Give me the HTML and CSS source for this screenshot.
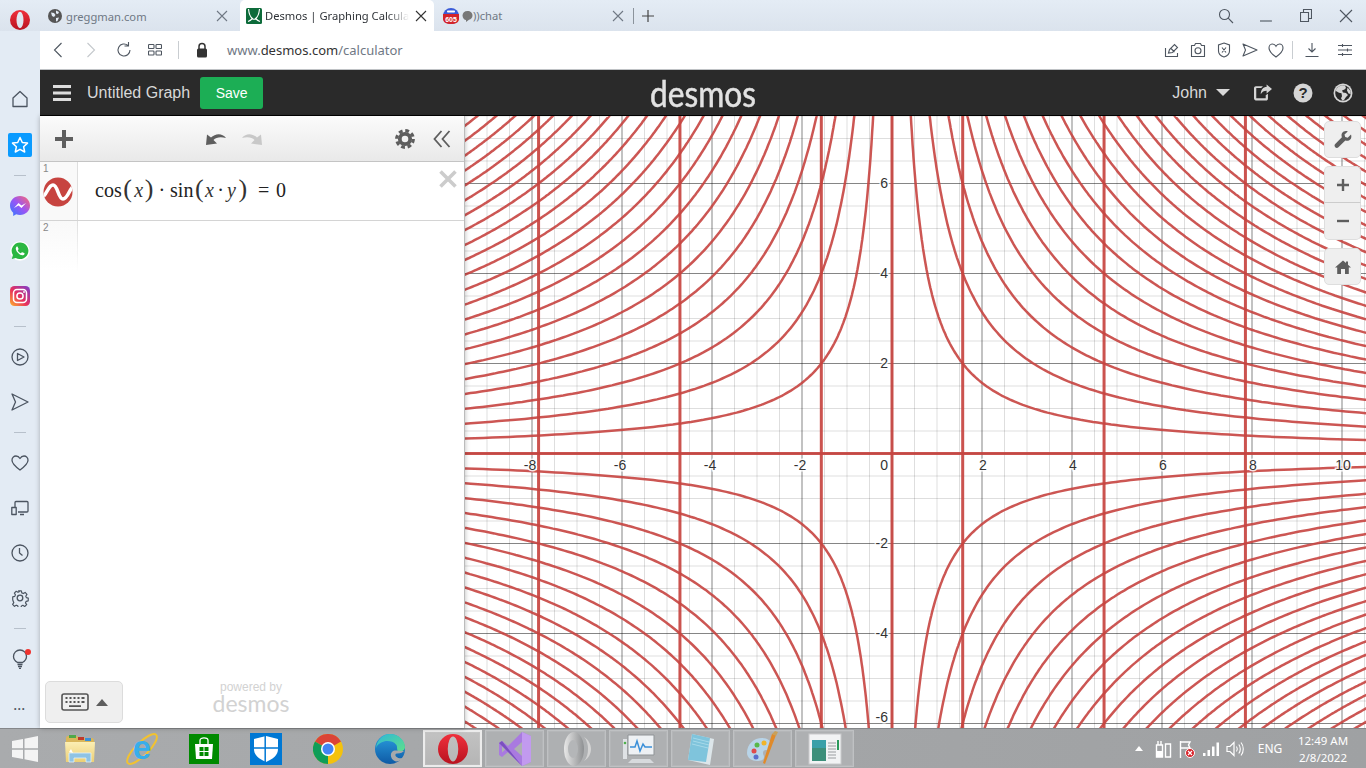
FILE: index.html
```html
<!DOCTYPE html>
<html lang="en">
<head>
<meta charset="utf-8">
<title>Desmos | Graphing Calculator</title>
<link rel="stylesheet" href="styles.css">
</head>
<body>
<header class="tabstrip">
  <div class="brand">
    <svg width="20" height="20" viewBox="0 0 20 20"><defs><linearGradient id="opr" x1="0" y1="0" x2="0" y2="1"><stop offset="0" stop-color="#f0303c"/><stop offset="1" stop-color="#b8121f"/></linearGradient></defs><path fill="url(#opr)" fill-rule="evenodd" d="M10 0a10 10 0 1 0 0 20 10 10 0 1 0 0-20zM10 1.700a3.500 8.300 0 1 1 0 16.600 3.500 8.300 0 1 1 0-16.600z"/></svg>
  </div>
  <div class="tab tab-one">
    <svg class="fav" width="14" height="14" viewBox="0 0 14 14"><circle cx="7" cy="7" r="7" fill="#555"/><path d="M3 3.500l3 .5 1.500 2L6 8 4 7zM8 1.500l3 1.500-1 2-2-.5zM8 9l3-.5-1.500 3.500L8 12.500z" fill="#e3ebf4"/></svg>
    <span class="tab-title">greggman.com</span>
    <svg class="close tab-close" viewBox="0 0 12 12"><path d="M1 1l10 10M11 1L1 11"/></svg>
  </div>
  <div class="tab tab-active">
    <svg class="fav" width="16" height="16" viewBox="0 0 16 16"><rect width="16" height="16" rx="1.500" fill="#0d6b3a"/><path d="M2.500 1c.5 5 1.500 8 4 9.500C5 12 3.500 13 2 13.500M13.500 1c-.5 5-1.500 8-4 9.500 1.500 1.500 3 2.500 4.500 3M6 10.500c1 .8 3 .8 4 0" fill="none" stroke="#fff" stroke-width="1.100"/></svg>
    <span class="tab-title tab-title-fade">Desmos | Graphing Calculator</span>
    <svg class="close tab-close-dark" viewBox="0 0 12 12"><path d="M1 1l10 10M11 1L1 11"/></svg>
  </div>
  <div class="tab tab-three">
    <svg class="fav" width="16" height="16" viewBox="0 0 16 16"><circle cx="8" cy="8" r="8" fill="#3a5bd8"/><rect x="4" y="2.500" width="8" height="2" rx=".8" fill="#fff"/><path d="M0 6h16v5c0 3-3 5-8 5s-8-2-8-5z" fill="#d3232a"/><text class="tinytext" x="8" y="13.500" text-anchor="middle">605</text></svg>
    <svg class="fav-bubble" width="11" height="12" viewBox="0 0 11 12"><path d="M5.500 1C2.500 1 .5 3 .5 5.500S2.500 10 4 10v2l3-2.200c2-.5 3.500-2.200 3.500-4.300C10.500 3 8.500 1 5.500 1z" fill="#777"/></svg>
    <span class="tab-title">))chat</span>
    <svg class="close tab-close-three" viewBox="0 0 12 12"><path d="M1 1l10 10M11 1L1 11"/></svg>
  </div>
  <span class="tab-divider"></span>
  <svg class="newtab" width="12" height="12" viewBox="0 0 12 12"><path d="M6 0v12M0 6h12"/></svg>
  <div class="winctl">
    <span class="winbtn"><svg width="16" height="16" viewBox="0 0 16 16"><circle cx="6.500" cy="6.500" r="5"/><path d="M10.200 10.200L15 15"/></svg></span>
    <span class="winbtn"><svg width="12" height="12" viewBox="0 0 12 12"><path d="M0 11h12"/></svg></span>
    <span class="winbtn"><svg width="12" height="14" viewBox="0 0 12 14"><path d="M.5 3.500h8v9h-8zM3.500 3.500v-3h8v9h-3"/></svg></span>
    <span class="winbtn"><svg width="14" height="14" viewBox="0 0 14 14"><path d="M1 1l12 12M13 1L1 13"/></svg></span>
  </div>
</header>

<div class="middle">
  <nav class="sidebar">
    <span class="side-item side-first"><svg class="side-svg" width="18" height="18" viewBox="0 0 18 18"><path d="M2 8l7-6.500L16 8v8.500H2z" stroke-linejoin="round"/></svg></span>
    <span class="side-item"><span class="star-tile"><svg width="20" height="20" viewBox="0 0 20 20"><path d="M10 2.500l2.300 5 5.200.6-3.900 3.600 1.100 5.300L10 14.300 5.300 17l1.100-5.300L2.500 8.100l5.200-.6z" fill="none" stroke="#fff" stroke-width="1.500" stroke-linejoin="round"/></svg></span></span>
    <span class="side-sep"></span>
    <span class="side-item"><svg width="20" height="20" viewBox="0 0 20 20"><defs><linearGradient id="ms" x1="0" y1="1" x2="1" y2="0"><stop offset="0" stop-color="#2f7bff"/><stop offset=".5" stop-color="#9a55f5"/><stop offset="1" stop-color="#ff6a6a"/></linearGradient></defs><path d="M10 0C4.400 0 0 4.100 0 9.600c0 2.900 1.200 5.400 3.200 7.100V20l3-1.700c1.200.4 2.500.6 3.800.6 5.600 0 10-4.100 10-9.400S15.600 0 10 0z" fill="url(#ms)"/><path d="M4 12l4.500-5 3 2.500L16 7l-4.500 5-3-2.500z" fill="#fff"/></svg></span>
    <span class="side-item"><svg width="20" height="20" viewBox="0 0 20 20"><circle cx="10" cy="10" r="9.800" fill="#fff"/><path d="M10 1.500a8.300 8.300 0 0 0-7.100 12.600L1.800 18l4-1.100A8.300 8.300 0 1 0 10 1.500z" fill="#2bb741"/><path d="M7 5.500c-.8.300-1.300 1.300-1.200 2.300.3 2.800 3.400 6 6.300 6.500 1.100.1 2.200-.5 2.400-1.400.1-.4 0-.7-.3-.8l-1.900-.9c-.3-.1-.6 0-.7.200l-.7.9c-1.400-.5-2.600-1.700-3.200-3.100l.7-.8c.2-.2.200-.5.100-.7l-.8-1.800c-.1-.3-.4-.5-.7-.4z" fill="#fff"/></svg></span>
    <span class="side-item"><svg width="20" height="20" viewBox="0 0 20 20"><defs><linearGradient id="ig" x1="0" y1="1" x2="1" y2="0"><stop offset="0" stop-color="#fdb32b"/><stop offset=".45" stop-color="#e8305c"/><stop offset="1" stop-color="#7a3ed0"/></linearGradient></defs><rect width="20" height="20" rx="4.500" fill="url(#ig)"/><rect x="3.500" y="3.500" width="13" height="13" rx="3.500" fill="none" stroke="#fff" stroke-width="1.500"/><circle cx="10" cy="10" r="3.100" fill="none" stroke="#fff" stroke-width="1.500"/><circle cx="14" cy="6" r=".9" fill="#fff"/></svg></span>
    <span class="side-sep"></span>
    <span class="side-item"><svg class="side-svg" width="18" height="18" viewBox="0 0 18 18"><circle cx="9" cy="9" r="8"/><path d="M6.500 5.500L13 9l-6.500 3.500z" stroke-linejoin="round"/></svg></span>
    <span class="side-item"><svg class="side-svg" width="18" height="18" viewBox="0 0 18 18"><path d="M1 1l16 8-16 8 3.500-8z" stroke-linejoin="round"/></svg></span>
    <span class="side-sep"></span>
    <span class="side-item"><svg class="side-svg" width="18" height="16" viewBox="0 0 18 16"><path d="M9 15C5 12 1 9 1 5.200 1 2.800 2.800 1 5 1c1.700 0 3.100 1 4 2.500C9.900 2 11.300 1 13 1c2.200 0 4 1.800 4 4.200C17 9 13 12 9 15z" stroke-linejoin="round"/></svg></span>
    <span class="side-item"><svg class="side-svg" width="18" height="16" viewBox="0 0 18 16"><path d="M4 7V2.500c0-.6.400-1 1-1h11c.6 0 1 .4 1 1V11c0 .6-.4 1-1 1H7M9 14.500h4M.8 7.500h4.400v7H.8z" stroke-linejoin="round"/></svg></span>
    <span class="side-item"><svg class="side-svg" width="18" height="18" viewBox="0 0 18 18"><circle cx="9" cy="9" r="8"/><path d="M8.500 4v5l3 2.500"/></svg></span>
    <span class="side-item"><svg class="side-svg" width="18" height="18" viewBox="0 0 18 18"><circle cx="9" cy="9" r="2.800"/><path d="M7.500 1h3l.5 2.300 1.700.8 2-1.300 2 2.200-1.300 2 .7 1.600 2.100.6-.1 3-2.200.5-.8 1.700 1.300 2-2.200 2-2-1.300-1.600.7-.6 2.100h-3l-.5-2.200-1.700-.7-2 1.200-2-2.100 1.300-2-.8-1.700L.9 10.700v-3l2.300-.5.700-1.700-1.200-2 2.100-2 2 1.200 1.400-.6z" transform="translate(.9 .9) scale(.9)" stroke-linejoin="round"/></svg></span>
    <span class="side-sep"></span>
    <span class="side-item side-bulb"><svg class="side-svg" width="16" height="20" viewBox="0 0 16 20"><path d="M5.500 13.500C3 12 1.500 10 1.500 7.500a6.500 6.500 0 0 1 13 0c0 2.500-1.500 4.500-4 6zM5.500 15.500h5M6 17.500h4M7 19.300h2"/></svg><span class="bulb-dot"></span></span>
    <span class="side-dots">•••</span>
  </nav>

  <div class="content">
    <div class="addressbar">
      <div class="nav-left">
        <span class="tb-slot"><svg class="tb-svg" width="10" height="16" viewBox="0 0 10 16"><path d="M8.500 1L1.500 8l7 7"/></svg></span>
        <span class="tb-slot"><svg class="tb-svg tb-faint" width="10" height="16" viewBox="0 0 10 16"><path d="M1.500 1l7 7-7 7"/></svg></span>
        <span class="tb-slot"><svg class="tb-svg" width="16" height="16" viewBox="0 0 16 16"><path d="M14 8a6 6 0 1 1-2-4.500M12.500 0v4h-4"/></svg></span>
        <span class="tb-slot tb-grid"><svg class="tb-svg" width="14" height="14" viewBox="0 0 14 14"><rect x=".5" y="1.500" width="5.500" height="4" rx=".8"/><rect x="8" y="1.500" width="5.500" height="4" rx=".8"/><rect x=".5" y="8" width="5.500" height="4" rx=".8"/><rect x="8" y="8" width="5.500" height="4" rx=".8"/></svg></span>
      </div>
      <span class="ab-divider"></span>
      <svg class="lock" width="14" height="16" viewBox="0 0 14 16"><path d="M4 7V4.500a3 3 0 0 1 6 0V7" fill="none" stroke="#333" stroke-width="1.500"/><rect x="2" y="6.500" width="10" height="9" rx="1.500" fill="#333"/></svg>
      <div class="url"><span class="url-dim">www.</span><span class="url-host">desmos.com</span><span class="url-dim">/calculator</span></div>
      <div class="nav-right">
        <span class="rt-slot"><svg class="tb-svg" width="16" height="16" viewBox="0 0 16 16"><path d="M1.500 6v8.500h12V11M4.500 11l1-3.500L10.500 2.500l3 3L8.500 10.500zM6.500 6l4 4"/></svg></span>
        <span class="rt-slot"><svg class="tb-svg" width="16" height="16" viewBox="0 0 16 16"><path d="M1.500 3.500h3l1-2h5l1 2h3v11h-13z" stroke-linejoin="round"/><circle cx="8" cy="8.800" r="3"/></svg></span>
        <span class="rt-slot"><svg class="tb-svg" width="14" height="16" viewBox="0 0 14 16"><path d="M7 1l5.500 2v6c0 3-2.500 5-5.500 6-3-1-5.500-3-5.500-6V3zM5 5.500l4 5M9 5.500l-4 5"/></svg></span>
        <span class="rt-slot"><svg class="tb-svg" width="16" height="14" viewBox="0 0 16 14"><path d="M1 1l14 6-14 6 2.500-6z" stroke-linejoin="round"/></svg></span>
        <span class="rt-slot"><svg class="tb-svg" width="16" height="15" viewBox="0 0 16 15"><path d="M8 14C4.500 11.500 1 8.500 1 5c0-2.200 1.600-4 3.500-4C6 1 7.300 2 8 3.300 8.700 2 10 1 11.500 1 13.400 1 15 2.800 15 5c0 3.500-3.500 6.500-7 9z"/></svg></span>
        <span class="ab-divider ab-divider-right"></span>
        <span class="rt-slot rt-dl"><svg class="tb-svg" width="14" height="14" viewBox="0 0 14 14"><path d="M7 0v9M3.500 5.500L7 9l3.500-3.500M.5 13.500h13"/></svg></span>
        <span class="rt-slot rt-set"><svg class="tb-svg" width="14" height="14" viewBox="0 0 14 14"><path d="M0 2.500h14M0 7h14M0 11.500h14M4.500 1v3M9.500 5.500v3M4.500 10v3"/></svg></span>
      </div>
    </div>

    <div class="dcg-header">
      <div class="hdr-left">
        <svg class="hamburger" width="18" height="16" viewBox="0 0 18 16"><path d="M0 0h18v3H0zM0 6.500h18v3H0zM0 13h18v3H0z"/></svg>
        <span class="graph-title">Untitled Graph</span>
        <span class="save-btn">Save</span>
      </div>
      <div class="hdr-logo">desmos</div>
      <div class="hdr-right">
        <span class="user">John</span>
        <span class="caret"></span>
        <span class="hdr-slot hdr-share"><svg width="18" height="17" viewBox="0 0 20 18"><path d="M14 0l6 5-6 5V7c-3 0-5 1-6.500 4 0-5 2.500-8 6.500-8zM13 12v3.500H2.500V4H8l2-2H2C1 2 0 3 0 4v11.500C0 16.700 1 18 2 18h11.500c1 0 2-1 2-2v-5.500z" fill="#d5d5d5"/></svg></span>
        <span class="hdr-slot"><svg width="20" height="20" viewBox="0 0 20 20"><circle cx="10" cy="10" r="9.500" fill="#d5d5d5"/><text class="qmark" x="10" y="15" text-anchor="middle">?</text></svg></span>
        <span class="hdr-slot"><svg width="20" height="20" viewBox="0 0 20 20"><circle cx="10" cy="10" r="9.500" fill="#d5d5d5"/><circle cx="10" cy="10" r="7.800" fill="#2a2a2a"/><path d="M9 2.200c-3 .5-5.500 2.500-6.500 5.500l3.500 2 2.500.5.500 3-1 2 1.500 2.500L11 17l2-3 2-2-2-2-3-.5-1-2 2.500-1L13 5l-1-2.500zM14.500 4.500l3 3.500.2 3-2.200-.5-1.500-3z" fill="#d5d5d5"/></svg></span>
      </div>
    </div>

    <div class="workspace">
      <aside class="panel">
        <div class="panel-tools">
          <svg class="pt-plus" width="18" height="18" viewBox="0 0 18 18"><path d="M7 0h4v7h7v4h-7v7H7v-7H0V7h7z"/></svg>
          <div class="pt-history">
            <svg class="pt-undo" width="22" height="16" viewBox="0 0 22 16"><path d="M1 14L2 3.500 6 6.500C10 2.500 17 1.500 21 7c-5-1.500-10-1-12.500 2L12 12.500z"/></svg>
            <svg class="pt-redo" width="22" height="16" viewBox="0 0 22 16"><path d="M21 14L20 3.500 16 6.500C12 2.500 5 1.500 1 7c5-1.500 10-1 12.500 2L10 12.500z"/></svg>
          </div>
          <svg class="pt-gear" width="20" height="20" viewBox="0 0 20 20"><circle cx="10" cy="10" r="5.200" fill="none" stroke="#5e5e5e" stroke-width="3.800"/><circle cx="10" cy="10" r="8.300" fill="none" stroke="#5e5e5e" stroke-width="3.200" stroke-dasharray="3.800 2.720"/></svg>
          <svg class="pt-collapse" width="18" height="18" viewBox="0 0 18 18"><path d="M8.500 1L1.500 9l7 8M16.500 1l-7 8 7 8"/></svg>
        </div>
        <div class="expr-row">
          <div class="gutter">
            <span class="expr-num">1</span>
            <svg class="expr-icon" width="30" height="30" viewBox="0 0 30 30"><defs><clipPath id="iconclip"><circle cx="15" cy="15" r="14.500"/></clipPath></defs><circle cx="15" cy="15" r="14.500" fill="#c74440"/><path clip-path="url(#iconclip)" d="M-1 20C3 20 5 8 10 8c5 0 5 14 10 14 5 0 7-12 11-13" fill="none" stroke="#fff" stroke-width="3.600"/></svg>
          </div>
          <div class="math">
            <span class="mop">cos</span><span class="paren g1">(</span><span class="mvar g2">x</span><span class="paren g1">)</span><span class="mdot g5">·</span><span class="mop g5">sin</span><span class="paren g1">(</span><span class="mvar g1">x</span><span class="mdot g3">·</span><span class="mvar g3">y</span><span class="paren g2">)</span><span class="mop g11">=</span><span class="mop g6">0</span>
          </div>
          <svg class="expr-close" width="18" height="18" viewBox="0 0 18 18"><path d="M1.500 1.500l15 15M16.500 1.500l-15 15"/></svg>
        </div>
        <div class="expr-empty">
          <div class="gutter gutter-fade"><span class="expr-num">2</span></div>
        </div>
        <div class="keypad-btn">
          <svg width="28" height="18" viewBox="0 0 28 18"><rect x="1" y="1" width="26" height="16" rx="2" fill="none" stroke="#555" stroke-width="1.600"/><path d="M4.500 5h2M8.500 5h2M12.500 5h2M16.500 5h2M20.500 5h3M4.500 9h2M8.500 9h2M12.500 9h2M16.500 9h2M20.500 9h3M8 13.200h12" stroke="#555" stroke-width="1.800" fill="none"/></svg>
          <span class="keypad-caret"></span>
        </div>
        <div class="powered"><span class="powered-by">powered by</span><span class="powered-logo">desmos</span></div>
      </aside>

      <main class="graph">
        <svg class="graph-svg" id="graph" width="901" height="612" viewBox="0 0 901 612">
          <g id="gridlines"></g>
          <g id="curves"></g>
          <g class="labels">
            <text x="65" y="353.500">-8</text><text x="155" y="353.500">-6</text><text x="245" y="353.500">-4</text><text x="335" y="353.500">-2</text>
            <text x="518" y="353.500">2</text><text x="608" y="353.500">4</text><text x="698" y="353.500">6</text><text x="788" y="353.500">8</text><text x="878" y="353.500">10</text>
            <text class="lbl-end" x="423" y="353.500">0</text>
            <text class="lbl-end" x="423" y="71.500">6</text><text class="lbl-end" x="423" y="161.500">4</text><text class="lbl-end" x="423" y="251.500">2</text>
            <text class="lbl-end" x="423" y="431.500">-2</text><text class="lbl-end" x="423" y="521.500">-4</text><text class="lbl-end" x="423" y="605.500">-6</text>
          </g>
        </svg>
        <div class="graph-ctrls">
          <span class="ctrl ctrl-single"><svg width="18" height="18" viewBox="0 0 18 18"><path d="M17 3.500l-3.300 3.300-2.500-.7-.7-2.500L13.800.4c-2.300-.8-4.700-.2-5.700 1.700-.8 1.400-.7 3-.2 4.100L1.200 13c-.9.900-.9 2.300 0 3.200s2.300 1 3.200.1l6.900-6.800c1.100.5 2.700.5 4-.2 1.900-1.200 2.500-3.500 1.700-5.800z" fill="#5e5e5e"/></svg></span>
          <div class="ctrl-group">
            <span class="ctrl ctrl-top"><svg width="14" height="14" viewBox="0 0 14 14"><path d="M5.800 1h2.400v4.800H13v2.400H8.200V13H5.800V8.200H1V5.800h4.800z" fill="#5e5e5e"/></svg></span>
            <span class="ctrl ctrl-bottom"><svg width="14" height="14" viewBox="0 0 14 14"><path d="M1 5.800h12v2.400H1z" fill="#5e5e5e"/></svg></span>
          </div>
          <span class="ctrl ctrl-single"><svg width="16" height="14" viewBox="0 0 16 14"><path d="M8 .5l3 2.600V1.500h2v3.300l3 2.700h-2.200V14H10V9H6v5H2.200V7.500H0z" fill="#5e5e5e"/></svg></span>
        </div>
      </main>
    </div>
  </div>
</div>

<footer class="taskbar">
  <span class="start"><svg width="28" height="26" viewBox="0 0 28 26"><path d="M1 5l11-2v9.300H1zM13.500 2.700L27 0v12.300H13.500zM1 13.800h11V23L1 21zM13.500 13.800H27V26l-13.500-2.700z" fill="#f4f4f4"/></svg></span>
  <span class="pin"><svg width="32" height="32" viewBox="0 0 32 32"><defs><linearGradient id="fld" x1="0" y1="0" x2="0" y2="1"><stop offset="0" stop-color="#fbeeb4"/><stop offset="1" stop-color="#eccf74"/></linearGradient></defs><path d="M2 5c0-1 1-2 2-2h9l2 2h13c1 0 2 1 2 2v4H2z" fill="#d9b65a"/><rect x="5" y="2" width="7" height="3" fill="#4fa84a"/><rect x="14" y="4" width="6" height="3" fill="#c0392b"/><rect x="21" y="5" width="6" height="3" fill="#3a8fd8"/><path d="M1 9h30l-1 20H2z" fill="url(#fld)"/><path d="M5 29V20h22v9h-5v-4H10v4z" fill="#8fc3e4" stroke="#dff1fb" stroke-width=".8"/><path d="M7 16l2 4-4-1z" fill="#fff"/></svg></span>
  <span class="pin"><svg width="34" height="34" viewBox="0 0 34 34"><ellipse cx="17" cy="17" rx="20" ry="6.500" transform="rotate(-45 17 17)" fill="none" stroke="#f2c230" stroke-width="2"/><text class="ie-e" x="17" y="27" text-anchor="middle">e</text></svg></span>
  <span class="pin"><svg width="30" height="30" viewBox="0 0 30 30"><rect width="30" height="30" fill="#008a00"/><path d="M6 10h18l-1 15H7z" fill="#fff"/><path d="M11 10V6.500c0-3.500 8-3.500 8 0V10" fill="none" stroke="#fff" stroke-width="1.300"/><path d="M10.500 13h4v4h-4zM15.500 13h4v4h-4zM10.500 18h4v4h-4zM15.500 18h4v4h-4z" fill="#008a00"/></svg></span>
  <span class="pin"><svg width="32" height="32" viewBox="0 0 32 32"><rect width="32" height="32" fill="#0078d4"/><path d="M16 3l12 3v10c0 6-5 10-12 13C9 26 4 22 4 16V6z" fill="#fff"/><path d="M15.200 3v26M4 15h24" stroke="#0078d4" stroke-width="1.500"/></svg></span>
  <span class="pin"><svg width="30" height="30" viewBox="0 0 30 30"><circle cx="15" cy="15" r="15" fill="#f4c20d"/><path d="M15 15L2 7.500A15 15 0 0 1 28 7.500z" fill="#db4437"/><path d="M15 15L2 7.500A15 15 0 0 0 15 30z" fill="#0f9d58"/><circle cx="15" cy="15" r="7" fill="#fff"/><circle cx="15" cy="15" r="5.500" fill="#4285f4"/></svg></span>
  <span class="pin"><svg width="32" height="32" viewBox="0 0 32 32"><defs><linearGradient id="edgeA" x1="0" y1="0" x2="0" y2="1"><stop offset="0" stop-color="#2a9fe0"/><stop offset="1" stop-color="#0f5aa5"/></linearGradient><linearGradient id="edgeB" x1="0" y1="0" x2="1" y2="1"><stop offset="0" stop-color="#2fb8d8"/><stop offset="1" stop-color="#5ee08a"/></linearGradient></defs><circle cx="16" cy="16" r="15" fill="url(#edgeA)"/><path d="M16 1c8 0 15 6 15 13 0 3-3 5-6 4.500-3-.5-1-5-3-7C19 8 14 7.500 10 8.500 6 9.500 3 12 2 15 3 7 9 1 16 1z" fill="url(#edgeB)"/><path d="M19 18c3-1 7 0 11 0-1 1-3 2.500-7 2.500-2 0-2 2-1 3 2 2 5 2 7 1.500-2 2-4 3.500-7 3.500-5-1-7-8-3-10.500z" fill="#a7a9ab"/></svg></span>
  <span class="task task-active"><svg width="30" height="30" viewBox="0 0 20 20"><path fill="url(#opr)" fill-rule="evenodd" d="M10 0a10 10 0 1 0 0 20 10 10 0 1 0 0-20zM10 1.700a3.500 8.300 0 1 1 0 16.600 3.500 8.300 0 1 1 0-16.600z"/></svg></span>
  <span class="task"><svg width="32" height="34" viewBox="0 0 32 34"><path d="M23 0l9 4v26l-9 4-14-14-6 5-3-2V11l3-2 6 5zM3 13.500v7L7 17zM23 10l-8 7 8 7z" fill="#a97ae0"/><path d="M23 0l9 4v26l-9 4z" fill="#c29aef"/><path d="M0 11l3-2 20 25-4-4z" fill="#7b4fbf"/></svg></span>
  <span class="task"><svg width="30" height="36" viewBox="0 0 30 36"><defs><linearGradient id="spk" x1="0" y1="0" x2="1" y2="0"><stop offset="0" stop-color="#e8e8e8"/><stop offset="1" stop-color="#8e9092"/></linearGradient></defs><ellipse cx="12" cy="18" rx="10" ry="17" fill="url(#spk)"/><ellipse cx="11" cy="18" rx="5" ry="9" fill="#b4b6b8"/><path d="M22 6c5 3 7 8 7 12s-2 9-7 12c3-3 4-8 4-12s-1-9-4-12z" fill="#d4d4d4"/></svg></span>
  <span class="task"><svg width="34" height="32" viewBox="0 0 34 32"><path d="M6 2h26v20H6z" fill="#eef1f4" stroke="#8f9396"/><path d="M8 14h5l2-6 3 10 3-7 2 3h7" fill="none" stroke="#3a8fd8" stroke-width="1.500"/><path d="M10 26h18l4 4H6z" fill="#d7dadd"/><rect x="1" y="6" width="4" height="20" fill="#dfe2e5"/><circle cx="3" cy="10" r="1.300" fill="#4fb04a"/></svg></span>
  <span class="task"><svg width="30" height="34" viewBox="0 0 30 34"><path d="M6 2l22 5-4 26-22-5z" fill="#dde6ea"/><path d="M2 28L6 2l18 4-4 24z" fill="#7fc4dc"/><path d="M7 6l16 4M7 9l16 4M6 12l16 4" stroke="#a6d9e9" stroke-width="1"/></svg></span>
  <span class="task"><svg width="36" height="36" viewBox="0 0 36 36"><path d="M2 22C2 13 9 7 17 7c6 0 9 3 9 7 0 4-3 5-5 5s-3 1-3 3 1 2 1 4c0 3-3 4-7 4-5 0-10-3-10-8z" fill="#b8d4e8"/><circle cx="9" cy="20" r="2.500" fill="#e04b4b"/><circle cx="12" cy="14" r="2.500" fill="#58b84a"/><circle cx="19" cy="12" r="2.500" fill="#f1b429"/><circle cx="11" cy="26" r="2.500" fill="#5b6ecc"/><path d="M31 4L20 33l-2-1 9-29z" fill="#e08a2a"/><path d="M27 3l4 2 2-4-3-1z" fill="#c9a05a"/></svg></span>
  <span class="task"><svg width="34" height="32" viewBox="0 0 34 32"><rect x="1" y="1" width="32" height="30" fill="#f2f3f4" stroke="#c9cacc"/><rect x="4" y="7" width="14" height="21" fill="#3d8f7a"/><rect x="4" y="7" width="14" height="8" fill="#3aa0a8"/><path d="M20 10h8M20 13h8M20 16h8M20 19h8M20 22h8M20 25h8" stroke="#9a9da0"/><rect x="29" y="7" width="2" height="10" fill="#2c9a5c"/></svg></span>
  <div class="tray">
    <span class="tray-slot"><span class="tray-up"></span></span>
    <span class="tray-slot"><svg width="18" height="18" viewBox="0 0 18 18"><path d="M2.500 5h6v12h-6zM4 1v4M7 1v4M11.500 4h5v13h-5z" fill="none" stroke="#fff" stroke-width="1.400"/><rect x="2.500" y="11" width="6" height="6" fill="#fff"/></svg></span>
    <span class="tray-slot"><svg width="18" height="18" viewBox="0 0 18 18"><path d="M2.500 1v17M3 2h9l-1.500 3 1.500 3H3" fill="none" stroke="#fff" stroke-width="1.400"/><circle cx="12" cy="13" r="4.500" fill="#d8232a" stroke="#fff"/><path d="M10 11l4 4M14 11l-4 4" stroke="#fff" stroke-width="1.200"/></svg></span>
    <span class="tray-slot"><svg width="18" height="16" viewBox="0 0 18 16"><path d="M1 12h2.500v3H1zM5.500 9H8v6H5.500zM10 5.500h2.500V15H10zM14.500 1.500H17V15h-2.500z" fill="#fff"/></svg></span>
    <span class="tray-slot"><svg width="18" height="18" viewBox="0 0 18 18"><path d="M1 6.500h3l4-4v13l-4-4H1z" fill="none" stroke="#fff" stroke-width="1.200"/><path d="M10.500 6.500c1 1.500 1 3.500 0 5M12.800 4.500c2 2.500 2 6.500 0 9M15 2.500c3 3.500 3 9.500 0 13" fill="none" stroke="#fff" stroke-width="1.100"/></svg></span>
    <span class="tray-lang">ENG</span>
    <span class="tray-clock"><span>12:49 AM</span><span>2/8/2022</span></span>
  </div>
</footer>
<script src="script.js"></script>
</body>
</html>
```
FILE: styles.css
```css
* { box-sizing: border-box; }
html, body { margin: 0; padding: 0; height: 100%; overflow: hidden; }
body { width: 1366px; height: 768px; display: flex; flex-direction: column; font-family: "Liberation Sans", Arial, sans-serif; background: #e3ebf4; }

/* Browser tab strip */
.tabstrip { height: 31px; flex: none; display: flex; align-items: stretch; background: linear-gradient(#e4ecf5, #dbe3ed); }
.brand { width: 40px; flex: none; display: flex; align-items: flex-start; justify-content: center; padding-top: 10px; }
.tab { display: flex; align-items: center; font-family: "Noto Sans", sans-serif; font-size: 11.2px; color: #6f7884; }
.tab-one { width: 200px; padding-left: 8px; padding-top: 1px; }
.tab-active { width: 194px; padding-left: 6px; background: #fff; border-radius: 5px 5px 0 0; color: #2f3338; }
.tab-three { width: 199px; padding-left: 9px; }
.fav { flex: none; }
.fav-bubble { flex: none; margin-left: 3px; }
.tinytext { font-family: "Liberation Sans", sans-serif; font-size: 7px; font-weight: 700; fill: #fff; }
.tab-title { margin-left: 4px; flex: 1; min-width: 0; white-space: nowrap; overflow: hidden; }
.tab-active .tab-title { margin-left: 3px; }
.tab-three .tab-title { margin-left: 0; }
.tab-title-fade { mask-image: linear-gradient(90deg, #000 85%, transparent 100%); -webkit-mask-image: linear-gradient(90deg, #000 85%, transparent 100%); }
.close { flex: none; width: 12px; height: 12px; fill: none; stroke: #6f7884; stroke-width: 1.100; }
.tab-close { margin-right: 12px; margin-left: 6px; }
.tab-close-dark { margin-right: 7px; margin-left: 6px; stroke: #333; }
.tab-close-three { margin-right: 9px; margin-left: 6px; }
.tab-divider { width: 1px; height: 16px; background: #8b939c; align-self: center; }
.newtab { align-self: center; margin-left: 8px; fill: none; stroke: #444; stroke-width: 1.200; }
.winctl { margin-left: auto; display: flex; }
.winbtn { width: 40px; display: flex; align-items: center; justify-content: center; }
.winbtn svg { fill: none; stroke: #4e5660; stroke-width: 1.100; }

/* Layout below the tab strip */
.middle { flex: 1; min-height: 0; display: flex; }
.sidebar { width: 40px; flex: none; display: flex; flex-direction: column; align-items: stretch; padding-top: 45px; background: #e3ebf4; }
.side-item { height: 45px; flex: none; display: flex; align-items: center; justify-content: center; position: relative; }
.side-first { margin-bottom: 1px; }
.side-svg { fill: none; stroke: #4b5460; stroke-width: 1.300; }
.star-tile { width: 24px; height: 24px; border-radius: 2px; background: #0a9bff; display: flex; align-items: center; justify-content: center; }
.side-sep { height: 16px; flex: none; display: flex; align-items: center; justify-content: center; }
.side-sep::before { content: ""; width: 12px; height: 1px; background: #b7c0cb; }
.bulb-dot { position: absolute; top: 13px; left: 25px; width: 6px; height: 6px; border-radius: 50%; background: #f0322e; }
.side-dots { margin-top: auto; height: 39px; text-align: center; font-size: 7px; letter-spacing: 1.500px; color: #4b5460; line-height: 39px; }

.content { flex: 1; min-width: 0; display: flex; flex-direction: column; }

/* Address bar */
.addressbar { height: 39px; flex: none; display: flex; align-items: center; background: #fff; border-bottom: 1px solid #bfc2c5; }
.nav-left { display: flex; gap: 9px; padding-left: 6px; }
.tb-slot { width: 24px; height: 24px; display: flex; align-items: center; justify-content: center; }
.tb-grid { margin-left: -2px; }
.tb-svg { fill: none; stroke: #4e5660; stroke-width: 1.100; }
.tb-faint { stroke: #c4c8cc; }
.ab-divider { width: 1px; height: 18px; background: #c9cdd1; margin-left: 11px; flex: none; }
.ab-divider-right { margin-left: 3px; }
.lock { margin-left: 16px; flex: none; }
.url { margin-left: 18px; font-family: "Noto Sans", sans-serif; font-size: 13px; color: #6f7884; white-space: nowrap; }
.url-host { color: #333; }
.nav-right { margin-left: auto; display: flex; align-items: center; padding-right: 9px; }
.rt-slot { width: 26px; height: 24px; display: flex; align-items: center; justify-content: center; flex: none; }
.rt-dl { width: 24px; margin-left: 7px; }
.rt-set { width: 24px; margin-left: 9px; }

/* Desmos header */
.dcg-header { height: 46px; flex: none; display: grid; grid-template-columns: 1fr 106px 1fr; align-items: center; background: #2a2a2a; border-bottom: 1px solid #000; color: #e0e0e0; }
.hdr-left { display: flex; align-items: center; padding-left: 13px; }
.hamburger { fill: #dcdcdc; flex: none; }
.graph-title { margin-left: 16px; font-size: 16px; color: #d8d8d8; }
.save-btn { margin-left: 10px; width: 63px; height: 32px; display: flex; align-items: center; justify-content: center; border-radius: 3px; background: #1cae55; color: #fff; font-size: 14px; }
.hdr-logo { display: flex; justify-content: center; font-family: Lato, "Liberation Sans", sans-serif; font-size: 36px; line-height: 40px; color: #e2e2e2; transform: scaleX(.88); -webkit-text-stroke: .5px #e2e2e2; }
.hdr-right { display: flex; align-items: center; justify-content: flex-end; padding-right: 11px; }
.user { font-size: 16px; color: #d8d8d8; }
.caret { width: 0; height: 0; border-left: 7px solid transparent; border-right: 7px solid transparent; border-top: 7px solid #d8d8d8; margin-left: 9px; margin-right: 21px; }
.hdr-slot { width: 24px; height: 24px; display: flex; align-items: center; justify-content: center; margin-left: 16px; }
.hdr-share { margin-left: 0; }
.qmark { font-family: "Liberation Sans", sans-serif; font-weight: 700; font-size: 15px; fill: #2a2a2a; }

/* Workspace */
.workspace { flex: 1; min-height: 0; display: flex; }
.panel { width: 425px; flex: none; position: relative; z-index: 2; background: #fff; border-right: 1px solid #bbb; box-shadow: 0 0 5px rgba(0,0,0,.28); }
.panel-tools { height: 46px; display: flex; align-items: center; background: linear-gradient(#fbfbfb, #e9e9e9); border-bottom: 1px solid #c4c4c4; padding: 0 15px 0 15px; }
.pt-plus { fill: #5e5e5e; flex: none; }
.pt-history { margin-left: 132px; display: flex; gap: 14px; flex: none; }
.pt-undo { fill: #5e5e5e; }
.pt-redo { fill: #c8c8c8; }
.pt-gear { margin-left: 132px; flex: none; }
.pt-collapse { margin-left: 18px; fill: none; stroke: #5e5e5e; stroke-width: 1.800; flex: none; }
.expr-row { height: 59px; display: flex; position: relative; border-bottom: 1px solid #d4d4d4; }
.gutter { width: 38px; flex: none; position: relative; background: #f9f9f9; border-right: 1px solid #dedede; display: flex; align-items: center; justify-content: center; padding-top: 2px; padding-right: 1px; }
.expr-num { position: absolute; top: 1px; left: 3px; font-size: 10px; color: #888; }
.math { margin-left: 17px; display: flex; align-items: baseline; padding-top: 12px; height: 100%; font-family: "Liberation Serif", "Times New Roman", serif; font-size: 20px; line-height: 30px; color: #222; white-space: nowrap; }
.paren { font-size: 26px; font-weight: 400; color: #333; }
.mvar { font-style: italic; color: #333; }
.g1 { margin-left: 1.500px; }
.g2 { margin-left: 2.500px; }
.g3 { margin-left: 3.200px; }
.g5 { margin-left: 5px; }
.g6 { margin-left: 6.500px; }
.g11 { margin-left: 11px; }
.expr-close { position: absolute; top: 8px; right: 7px; fill: none; stroke: #ccc; stroke-width: 3.600; }
.expr-empty { height: 50px; }
.gutter-fade { height: 100%; background: linear-gradient(#f9f9f9, #fff); border-right-color: transparent; border-image: linear-gradient(#dedede, #fff) 1; }
.keypad-btn { position: absolute; left: 5px; bottom: 5px; width: 78px; height: 42px; display: flex; align-items: center; gap: 7px; padding-left: 15px; background: #efefef; border: 1px solid #dcdcdc; border-radius: 5px; }
.keypad-caret { width: 0; height: 0; border-left: 6.500px solid transparent; border-right: 6.500px solid transparent; border-bottom: 7px solid #5e5e5e; }
.powered { position: absolute; left: 171px; bottom: 15px; width: 80px; display: flex; flex-direction: column; align-items: center; color: #d2d2d2; }
.powered-by { font-size: 12px; line-height: 11px; }
.powered-logo { font-family: Lato, "Liberation Sans", sans-serif; font-size: 23px; line-height: 20px; }

/* Graph */
.graph { flex: 1; min-width: 0; position: relative; background: #fff; overflow: hidden; }
.graph-svg { display: block; }
.minor { stroke: #000; stroke-opacity: .13; stroke-width: 1; fill: none; }
.major { stroke: #000; stroke-opacity: .48; stroke-width: 1; fill: none; }
.curve { stroke: #c74440; stroke-opacity: .9; stroke-width: 2.500; fill: none; }
.curve-axis { stroke: #c74440; stroke-opacity: .92; stroke-width: 3; fill: none; }
.labels text { font-family: "Liberation Sans", Arial, sans-serif; font-size: 14px; fill: #333; text-anchor: middle; paint-order: stroke; stroke: #fff; stroke-width: 3px; stroke-opacity: .85; }
.labels text.lbl-end { text-anchor: end; }
.graph-ctrls { position: absolute; top: 5px; right: 5px; width: 37px; display: flex; flex-direction: column; gap: 8px; }
.ctrl { width: 37px; height: 37px; display: flex; align-items: center; justify-content: center; background: #efefef; border: 1px solid #dedede; }
.ctrl-single { border-radius: 5px; }
.ctrl-group { display: flex; flex-direction: column; }
.ctrl-top { border-radius: 5px 5px 0 0; border-bottom-color: #ccc; }
.ctrl-bottom { border-radius: 0 0 5px 5px; border-top: none; }

/* Taskbar */
.taskbar { height: 40px; flex: none; display: flex; align-items: center; padding-right: 13px; background: linear-gradient(90deg, #a9abad, #a3a5a7 60%, #9fa1a3); border-top: 1px solid #85878a; }
.start { width: 49px; flex: none; display: flex; align-items: center; justify-content: center; }
.pin { width: 62px; flex: none; display: flex; align-items: center; justify-content: center; }
.pin:nth-of-type(7) { margin-right: 2px; }
.ie-e { font-family: "Liberation Sans", sans-serif; font-weight: 700; font-size: 33px; fill: #38aeea; }
.task { width: 59px; height: 37px; flex: none; margin-right: 3px; display: flex; align-items: center; justify-content: center; background: #aeb0b2; border: 1px solid #bfc1c3; box-shadow: inset 0 0 0 1px rgba(255,255,255,.08); }
.task-active { background: linear-gradient(#c2c2c2, #b5b5b5); border: 2px solid #ececec; }
.tray { margin-left: auto; display: flex; align-items: center; color: #fff; }
.tray-slot { width: 24px; display: flex; align-items: center; justify-content: center; }
.tray-up { width: 0; height: 0; border-left: 4px solid transparent; border-right: 4px solid transparent; border-bottom: 5px solid #fff; }
.tray-lang { width: 46px; text-align: center; font-family: "Noto Sans", sans-serif; font-size: 12px; }
.tray-clock { width: 60px; display: flex; flex-direction: column; align-items: center; font-family: "Noto Sans", sans-serif; font-size: 11.5px; line-height: 17px; }
```
FILE: script.js
```js
(function () {
  var NS = "http://www.w3.org/2000/svg";
  var X0 = 427, Y0 = 337.5, U = 45, W = 901, H = 612;
  var grid = document.getElementById("gridlines");
  var curves = document.getElementById("curves");

  function line(parent, cls, x1, y1, x2, y2) {
    var el = document.createElementNS(NS, "line");
    el.setAttribute("class", cls);
    el.setAttribute("x1", x1); el.setAttribute("y1", y1);
    el.setAttribute("x2", x2); el.setAttribute("y2", y2);
    parent.appendChild(el);
  }

  var i;
  for (i = -24; i <= 24; i++) {
    var cls = i % 4 === 0 ? "major" : "minor";
    var x = X0 + i * U / 2;
    if (x >= 0 && x <= W) line(grid, cls, x, 0, x, H);
    var y = Y0 + i * U / 2;
    if (y >= 0 && y <= H) line(grid, cls, 0, y, W, y);
  }

  function branch(k, sx, sy) {
    var c = k * Math.PI, d = "", start = c / 8.5, end = 11.5, n = 160;
    if (start >= end) return;
    for (var j = 0; j <= n; j++) {
      var xv = start * Math.pow(end / start, j / n);
      var px = X0 + sx * xv * U, py = Y0 - sy * (c / xv) * U;
      d += (j ? "L" : "M") + px.toFixed(1) + " " + py.toFixed(1);
    }
    var p = document.createElementNS(NS, "path");
    p.setAttribute("class", "curve");
    p.setAttribute("d", d);
    curves.appendChild(p);
  }

  for (var k = 1; k <= 32; k++) {
    branch(k, 1, 1); branch(k, -1, -1); branch(k, 1, -1); branch(k, -1, 1);
  }
  for (var m = -7; m <= 7; m += 2) {
    var cx = X0 + m * Math.PI / 2 * U;
    line(curves, "curve-axis", cx, 0, cx, H);
  }
  line(curves, "curve-axis", X0, 0, X0, H);
  line(curves, "curve-axis", 0, Y0, W, Y0);
})();
```
